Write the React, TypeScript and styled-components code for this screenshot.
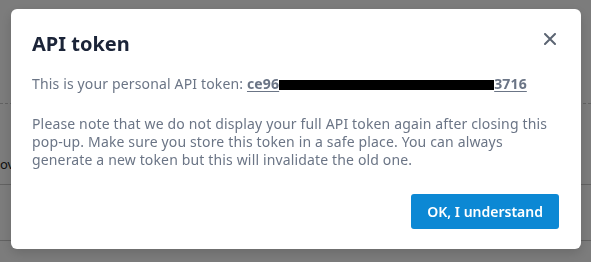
import styled, { createGlobalStyle } from 'styled-components';

const GlobalStyle = createGlobalStyle`
  html, body {
    margin: 0;
    padding: 0;
    width: 591px;
    height: 262px;
    overflow: hidden;
    font-family: "Noto Sans", "Open Sans", "Liberation Sans", sans-serif;
  }
`;

const App = () => {
  return (
    <>
      <GlobalStyle />
      <BackPage>
        <BackRow $dashed $height={104} />
        <BackRow $height={81}>
          <BackLabel>ov</BackLabel>
        </BackRow>
        <BackRow $height={56} />
      </BackPage>

      <Overlay>
        <Dialog role="dialog" aria-labelledby="api-token-title">
          <DialogHeader>
            <DialogTitle id="api-token-title">API token</DialogTitle>
            <CloseButton aria-label="Close">
              <svg width="12" height="12" viewBox="0 0 12 12">
                <path d="M1 1 L11 11 M11 1 L1 11" stroke="currentColor" strokeWidth="2" strokeLinecap="round" />
              </svg>
            </CloseButton>
          </DialogHeader>

          <TokenLine>
            This is your personal API token:{' '}
            <TokenLink href="#">
              ce96<Redacted />3716
            </TokenLink>
          </TokenLine>

          <Notice>
            Please note that we do not display your full API token again after closing this
            pop-up. Make sure you store this token in a safe place. You can always
            generate a new token but this will invalidate the old one.
          </Notice>

          <DialogFooter>
            <PrimaryButton>OK, I understand</PrimaryButton>
          </DialogFooter>
        </Dialog>
      </Overlay>
    </>
  );
};

export default App;

// region STYLES

const BackPage = styled.div`
  width: 591px;
  height: 262px;
  background: #f9f9f9;
  display: flex;
  flex-direction: column;
`;

const BackRow = styled.div<{ $dashed?: boolean; $height: number }>`
  height: ${(p) => p.$height}px;
  box-sizing: border-box;
  border-bottom: 1px ${(p) => (p.$dashed ? 'dashed' : 'solid')} #c4c4c4;
  display: flex;
  align-items: flex-end;
  padding-bottom: 11px;
  flex-shrink: 0;
`;

const BackLabel = styled.span`
  font-size: 13px;
  line-height: 18px;
  color: #222;
`;

const Overlay = styled.div`
  position: fixed;
  inset: 0;
  background: rgba(0, 0, 0, 0.5);
  padding: 9px 0 0 11px;
  box-sizing: border-box;
`;

const Dialog = styled.div`
  width: 570px;
  height: 240px;
  box-sizing: border-box;
  background: #fff;
  border-radius: 6px;
  padding: 21px 22px 20px 21px;
  display: flex;
  flex-direction: column;
  box-shadow: 0 4px 12px rgba(0, 0, 0, 0.15);
`;

const DialogHeader = styled.div`
  display: flex;
  align-items: flex-start;
  justify-content: space-between;
`;

const DialogTitle = styled.h2`
  margin: 0;
  font-size: 20px;
  line-height: 28px;
  font-weight: 700;
  color: #1b2438;
`;

const CloseButton = styled.button`
  border: 0;
  background: none;
  padding: 0;
  margin: 2px 2px 0 0;
  width: 14px;
  height: 14px;
  display: flex;
  align-items: center;
  justify-content: center;
  color: #5c6573;
  cursor: pointer;
`;

const BodyText = styled.p`
  font-size: 14px;
  line-height: 18px;
  letter-spacing: 0.15px;
  color: #6b7586;
`;

const TokenLine = styled(BodyText)`
  margin: 17px 0 0;
`;

const TokenLink = styled.a`
  color: #6b7586;
  font-weight: 700;
  text-decoration: underline;
  text-underline-offset: 2px;
`;

const Redacted = styled.span`
  display: inline-block;
  width: 215px;
  height: 10px;
  background: #000;
  vertical-align: -1px;
`;

const Notice = styled(BodyText)`
  margin: 22px 0 0;
`;

const DialogFooter = styled.div`
  margin-top: auto;
  display: flex;
  justify-content: flex-end;
`;

const PrimaryButton = styled.button`
  height: 35px;
  padding: 0 16px;
  border: 0;
  border-radius: 3px;
  background: #0c88d4;
  color: #fff;
  font-family: inherit;
  font-size: 14px;
  font-weight: 600;
  cursor: pointer;
`;

// endregion
